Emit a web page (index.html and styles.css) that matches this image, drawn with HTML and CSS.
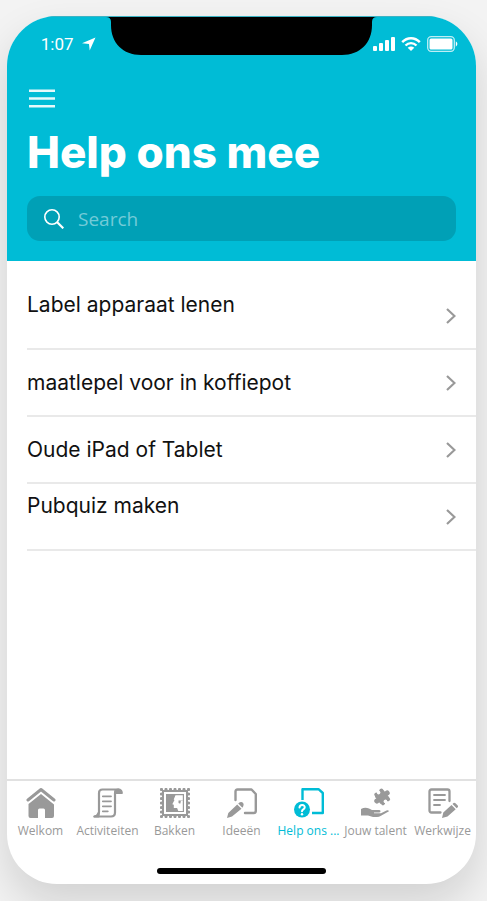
FILE: index.html
```html
<!DOCTYPE html>
<html lang="nl">
<head>
<meta charset="utf-8">
<meta name="viewport" content="width=device-width, initial-scale=1">
<title>Help ons mee</title>
<link rel="stylesheet" href="styles.css">
</head>
<body>
<main class="phone">
  <header class="header">
    <div class="status">
      <div class="clock">
        <span>1:07</span>
        <svg width="14" height="14" viewBox="0 0 14 14" aria-hidden="true"><path fill="currentColor" d="M13.5.5 0 6.3l7 .8.7 6.4z"/></svg>
      </div>
      <svg class="notch" width="272" height="38" viewBox="0 0 272 38" aria-hidden="true"><path d="M0 0h271q-5 0-5 5v3c0 18-12 30-30 30H35C17 38 5 26 5 8V5q0-5-5-5z"/></svg>
      <div class="signals">
        <svg width="22" height="14" viewBox="0 0 22 14" fill="#fff" aria-hidden="true"><rect y="9" width="4" height="5" rx="1"/><rect x="6" y="6" width="4" height="8" rx="1"/><rect x="12" y="3" width="4" height="11" rx="1"/><rect x="18" width="4" height="14" rx="1"/></svg>
        <svg width="20" height="14" viewBox="0 0 20 14" aria-hidden="true"><g fill="none" stroke="#fff" stroke-width="2.4"><path d="M1.2 5.2c5-5.2 12.600-5.200 17.600 0"/><path d="M4.500 8.500c3.200-3.200 7.800-3.200 11 0"/></g><path fill="#fff" d="M6.700 10.700q3.300-2.600 6.600 0L10 14z"/></svg>
        <svg width="31" height="16" viewBox="0 0 31 16" aria-hidden="true"><rect x=".7" y=".7" width="26.600" height="14.600" rx="3.500" fill="none" stroke="#fff" stroke-opacity=".75" stroke-width="1.300"/><rect x="2.500" y="2.500" width="23" height="11" rx="1.500" fill="#fff"/><path fill="#fff" d="M28.800 5.300q3.200 2.700 0 5.400z"/></svg>
      </div>
    </div>
    <button class="menu" type="button" aria-label="Menu">
      <svg width="26" height="19" viewBox="0 0 26 19" aria-hidden="true"><path stroke="#fff" stroke-opacity=".9" stroke-width="2.600" d="M0 1.700h26M0 9.500h26M0 17.300h26"/></svg>
    </button>
    <h1 class="title">Help ons mee</h1>
    <label class="search">
      <svg width="20" height="20" viewBox="0 0 20 20" fill="none" stroke="#fff" aria-hidden="true"><circle cx="8" cy="8" r="7.200" stroke-width="1.600"/><path stroke-width="2.200" d="m13 13 6.300 6.300"/></svg>
      <input class="search-input" type="search" placeholder="Search" aria-label="Search">
    </label>
  </header>

  <div class="list">
    <a class="row row-top" href="#"><span>Label apparaat lenen</span><svg class="chevron" viewBox="0 0 10 16" aria-hidden="true"><path d="m1 1 7.500 7L1 15"/></svg></a>
    <a class="row" href="#"><span>maatlepel voor in koffiepot</span><svg class="chevron" viewBox="0 0 10 16" aria-hidden="true"><path d="m1 1 7.500 7L1 15"/></svg></a>
    <a class="row" href="#"><span>Oude iPad of Tablet</span><svg class="chevron" viewBox="0 0 10 16" aria-hidden="true"><path d="m1 1 7.500 7L1 15"/></svg></a>
    <a class="row row-top" href="#"><span>Pubquiz maken</span><svg class="chevron" viewBox="0 0 10 16" aria-hidden="true"><path d="m1 1 7.500 7L1 15"/></svg></a>
  </div>

  <nav class="tabs">
    <a class="tab" href="#">
      <svg class="icon" viewBox="0 0 30 30" aria-hidden="true"><path fill="none" stroke="currentColor" stroke-width="3" stroke-linecap="round" stroke-linejoin="round" d="M2 12 15 1.500 28 12"/><path fill="currentColor" d="m15 6 13 10.500V28q0 2-2 2h-7v-8q0-1.500-1.500-1.500h-4Q12 20.500 12 22v8H4.500q-2 0-2-2V16z"/></svg>
      <span>Welkom</span></a>
    <a class="tab" href="#">
      <svg class="icon" viewBox="0 0 30 30" fill="none" stroke="currentColor" stroke-width="2.200" stroke-linejoin="round" aria-hidden="true"><path d="M1.500 28.500H18q4 0 4-4V5q0-3.500 3.500-3.500H9.500Q6 1.500 6 5v19q0 4.500-4.500 4.500z"/><path fill="currentColor" d="M22.500 5q0-3.500 3-3.500t3.300 3.500zM1.500 28.500h4V25q-1 3-4 3.500z"/><path stroke-width="1.800" stroke-linecap="round" d="M9.800 8.300H18M9.800 13.300H18M9.800 18.300H18M9.800 23.300h5"/></svg>
      <span>Activiteiten</span></a>
    <a class="tab" href="#">
      <svg class="icon" viewBox="0 0 30 30" aria-hidden="true"><rect x="3" y="3" width="24" height="24" fill="none" stroke="currentColor" stroke-width="2"/><rect x="1.500" y="1.500" width="27" height="27" fill="none" stroke="currentColor" stroke-width="3.200" stroke-linecap="round" stroke-dasharray="0 4.500"/><path fill="currentColor" fill-rule="evenodd" d="M6 6h18v18H6zM15.500 7.200l-1.800 4.300.8.500-2.200 4.200 1.500.6v3.200h3.300l1.200 3h4.500V12.600l-1.800-.5-.6 3.400q-1.800.3-2-1.200l.3-2q2 .4 4.100 0V7.200z"/></svg>
      <span>Bakken</span></a>
    <a class="tab" href="#">
      <svg class="icon" viewBox="0 0 30 30" aria-hidden="true"><path fill="none" stroke="currentColor" stroke-width="2.400" stroke-linejoin="round" stroke-linecap="round" d="M8.500 12V3.500q0-2 2-2h14L28.800 6v17q0 2-2 2H18"/><path fill="currentColor" d="m10.200 16.500 4.300 4.300L5 28.500 0 30l1.300-5zM11.200 15.500q3-2.500 4.700-.8 1.700 1.700-.5 5z"/></svg>
      <span>Ideeën</span></a>
    <a class="tab tab-active" href="#" aria-current="page">
      <svg class="icon" viewBox="0 0 30 30" aria-hidden="true"><path fill="none" stroke="currentColor" stroke-width="2.400" stroke-linejoin="round" d="M8.500 12V1.200h16L28.800 5v20H18"/><circle cx="8" cy="21.500" r="8" fill="currentColor"/><path fill="none" stroke="#fff" stroke-width="2" stroke-linecap="round" d="M5.500 19.500c.2-3.700 5.500-3.200 5.200 0C10.500 21.500 8 21.300 8 23.300"/><circle cx="8" cy="26.300" r="1.200" fill="#fff"/></svg>
      <span>Help ons ...</span></a>
    <a class="tab" href="#">
      <svg class="icon" viewBox="0 0 30 30" fill="currentColor" aria-hidden="true"><g transform="rotate(-38 21 9)"><rect x="15.500" y="4" width="11" height="10" rx="1"/><circle cx="14.500" cy="9" r="2.600"/><circle cx="27.500" cy="9" r="2.600"/><circle cx="18" cy="3.500" r="2"/><circle cx="24.500" cy="3.500" r="2"/><circle cx="18" cy="14.500" r="2"/><circle cx="24.500" cy="14.500" r="2"/><circle cx="21" cy="3.500" r="1.800" fill="#fff"/><circle cx="21" cy="14.500" r="1.800" fill="#fff"/></g><path d="M0 21q4-2.300 8-.5l3 1.500h7q1.500 0 1.500 1.200t-1.500 1.300h-5v.8h7l5.500-2.800q2-.5 2.500.7L20 27.800Q18 29 16 29h-4l-5-1.500H0z"/></svg>
      <span>Jouw talent</span></a>
    <a class="tab" href="#">
      <svg class="icon" viewBox="0 0 30 30" aria-hidden="true"><g fill="none" stroke="currentColor" stroke-linecap="round"><path stroke-width="2.300" d="M12.500 24.500h-9q-2 0-2-2v-19q0-2 2-2h16q2 0 2 2V13"/><path stroke-width="1.800" d="M6 7h11M6 12h11M6 17h6"/></g><path fill="currentColor" d="m23.500 17 4.200 4.200-8.200 7.300-5.500 1.500 1.300-5.500zM24.500 16l1-1q1-.7 2 .3l2 2q1 1 .2 2l-1 1z"/></svg>
      <span>Werkwijze</span></a>
  </nav>
  <div class="home-bar"></div>
</main>
</body>
</html>
```
FILE: styles.css
```css
* { box-sizing: border-box; }

body {
  margin: 0;
  min-height: 100vh;
  padding: 16px 11px 17px 7px;
  display: flex;
  overflow: hidden;
  background: #f3f3f3;
  font-family: "Open Sans", "Noto Sans", sans-serif;
}

a { color: inherit; text-decoration: none; }

.phone {
  flex: 1;
  min-width: 0;
  display: flex;
  flex-direction: column;
  overflow: hidden;
  border-radius: 50px;
  background: #fff;
  box-shadow: 0 20px 44px rgba(0, 0, 0, 0.14);
}

.header {
  padding: 0 20px 20px;
  border-top: 1px solid #3bb3c4;
  background: #00bcd6;
  color: #fff;
}

.status {
  display: grid;
  grid-template-columns: minmax(0, 1fr) 272px minmax(0, 1fr);
  height: 72px;
  margin: 0 -20px;
}

.clock {
  display: flex;
  align-items: center;
  justify-content: flex-end;
  gap: 8px;
  height: 54px;
  padding-right: 10px;
  font: 17px/20px Roboto, sans-serif;
}

.signals {
  display: flex;
  align-items: center;
  justify-content: flex-end;
  gap: 6px;
  height: 54px;
  padding-right: 18px;
}

.signals svg { flex: none; }

.menu {
  display: flex;
  margin-left: 2px;
  padding: 0;
  border: 0;
  background: none;
}

.title {
  margin: 14px 0;
  font: 800 44px/60px Inter, sans-serif;
  white-space: nowrap;
}

.search {
  display: flex;
  align-items: center;
  gap: 14px;
  height: 45px;
  padding: 0 17px;
  border-radius: 13px;
  background: #00a0b6;
}

.search-input {
  flex: 1;
  min-width: 0;
  padding: 0;
  border: 0;
  outline: 0;
  background: none;
  color: #fff;
  font: 19px/24px "Open Sans", sans-serif;
}

.search-input::placeholder { color: #73cbd8; opacity: 1; }

.list {
  flex: 1;
  padding: 22px 0 0 20px;
}

.row {
  display: flex;
  align-items: center;
  justify-content: space-between;
  height: 67px;
  padding-right: 20px;
  border-bottom: 2px solid #e9e9e9;
  color: #111;
  font: 21px/28px Inter, sans-serif;
}

.row-top span {
  align-self: flex-start;
  padding-top: 8px;
}

.chevron {
  width: 10px;
  height: 16px;
  fill: none;
  stroke: #999;
  stroke-width: 2.2;
}

.tabs {
  display: grid;
  grid-template-columns: repeat(7, minmax(0, 1fr));
  padding-top: 7px;
  border-top: 2px solid #e1e1e1;
}

.tab {
  display: flex;
  flex-direction: column;
  align-items: center;
  gap: 4px;
  color: #999;
  font: 12px/18px "Open Sans", sans-serif;
  white-space: nowrap;
}

.tab-active {
  color: #00bcd6;
  font-weight: 500;
}

.icon { width: 30px; height: 30px; }

.home-bar {
  align-self: center;
  width: 36%;
  height: 6px;
  margin: 28px 0 10px;
  border-radius: 3px;
  background: #000;
}
```
